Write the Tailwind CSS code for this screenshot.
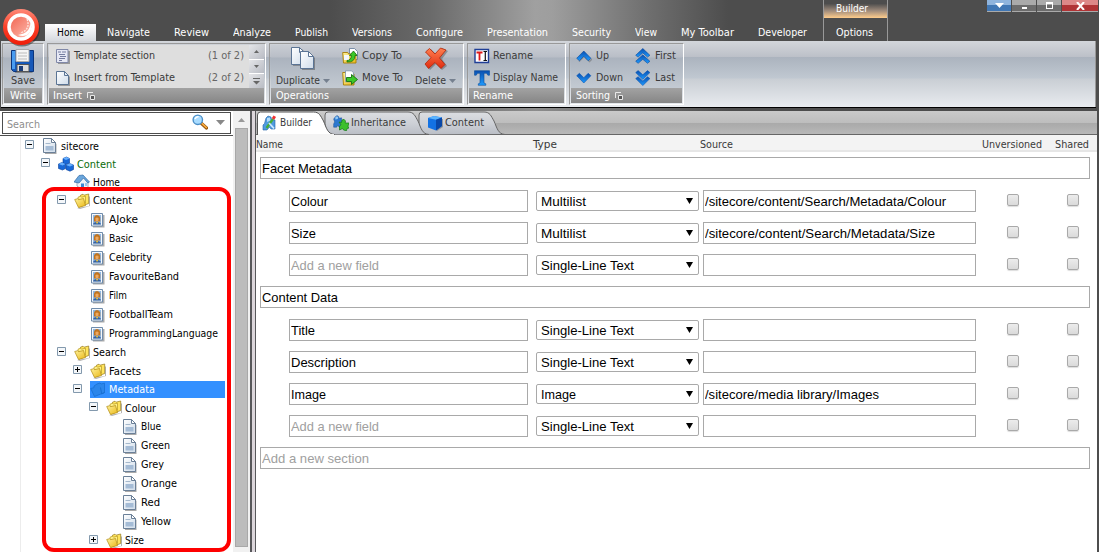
<!DOCTYPE html>
<html lang="en">
<head>
<meta charset="utf-8">
<title>Content Editor</title>
<script src="https://cdn.jsdelivr.net/npm/@tailwindcss/browser@4"></script>
</head>
<body class="relative h-[552px] w-[1099px] overflow-hidden bg-white font-['DejaVu_Sans_Condensed','DejaVu_Sans',sans-serif] text-[11px] leading-[14px] whitespace-nowrap text-[#3a3a3a] [font-stretch:condensed]">

<svg class="absolute h-0 w-0">
  <defs>
    <linearGradient id="gBlue" x1="0" y1="0" x2="0" y2="1"><stop offset="0" stop-color="#0a4fb0"/><stop offset="1" stop-color="#1e9bff"/></linearGradient>
    <linearGradient id="gPage" x1="0" y1="0" x2="1" y2="1"><stop offset="0" stop-color="#fff"/><stop offset="1" stop-color="#cfdcea"/></linearGradient>
    <linearGradient id="gFold" x1="0" y1="0" x2="1" y2="1"><stop offset="0" stop-color="#fff29a"/><stop offset="1" stop-color="#eab818"/></linearGradient>
    <linearGradient id="gRed" x1="0" y1="0" x2="0" y2="1"><stop offset="0" stop-color="#ff8050"/><stop offset="1" stop-color="#e02c10"/></linearGradient>
    <linearGradient id="gTab" x1="0" y1="0" x2="0" y2="1"><stop offset="0" stop-color="#dcdee2"/><stop offset=".5" stop-color="#cdd0d6"/><stop offset="1" stop-color="#b9bdc5"/></linearGradient>
    <linearGradient id="gOrb" x1="0" y1="0" x2="0" y2="1"><stop offset="0" stop-color="#ff8a78"/><stop offset=".5" stop-color="#fa4028"/><stop offset="1" stop-color="#f01c08"/></linearGradient>
    <linearGradient id="gCore" x1="0" y1="0" x2="1" y2="1"><stop offset="0" stop-color="#f0604c"/><stop offset="1" stop-color="#ffc4b8"/></linearGradient>
  </defs>
  <symbol id="doc" viewBox="0 0 16 16"><path d="M3 3h8.500l3 3v10H3z" fill="#555" opacity=".5"/><path d="M1.500.500h8l4 4v10h-12z" fill="url(#gPage)" stroke="#6b8098"/><path d="M9.500.500v4h4z" fill="#fff" stroke="#6b8098"/><path d="M3.500 5.500h5" stroke="#a5b8cc"/><path d="M3.500 8h8v4.500h-8z" fill="#a5bcd6"/></symbol>
  <symbol id="blank" viewBox="0 0 16 16"><path d="M3 3h8l4 4v9H3z" fill="#444" opacity=".45"/><path d="M1.500 1.500h8l4 4v9h-12z" fill="url(#gPage)" stroke="#5b7494"/><path d="M9.500 1.500v4h4z" fill="#e4edf6" stroke="#5b7494"/></symbol>
  <symbol id="tmpl" viewBox="0 0 16 16"><path d="M3 3h12v13H3z" fill="#444" opacity=".45"/><path d="M1.500 1.500h11.500v13H1.500z" fill="#e6e8f4" stroke="#8088a8"/><path d="M3 4h3M7 4h4M4 6.500h6M5 8.500h6M4 10.500h6M4 12.500h3" stroke="#757da0"/></symbol>
  <symbol id="folder" viewBox="0 0 16 16"><path d="M3 15l12-2V3l1 1v9L6 16z" fill="#444" opacity=".4"/><path d="M6.500 2.200l2.500-1 1 1 4.700-1.200v9.500L5 14z" fill="#ffe45c" stroke="#94771a" stroke-width=".7"/><path d="M4 4.200l2.500-1 1 1 4-1v7L5 14z" fill="#fff088" stroke="#b89820" stroke-width=".7"/><path d="M.7 6.500l3-.8 1 1 4.800-1.200 2 7L4.500 14.500z" fill="url(#gFold)" stroke="#b08a10" stroke-width=".7"/></symbol>
  <symbol id="folderSel" viewBox="0 0 16 16"><path d="M7 2l3-1 1 1 3.500-.8v9.300L4.500 14.500 .7 6.500l3.300-.8V4z" fill="#2b86ea" stroke="#1870d2" stroke-width=".8"/><path d="M10.500 5.500l1.200 6.500 3-1.500" stroke="#1870d2" fill="none"/></symbol>
  <symbol id="person" viewBox="0 0 16 16"><path d="M3 3h11.500v12.500H3z" fill="#444" opacity=".45"/><path d="M1.500 1.500h11v12.500h-11z" fill="#f4f8fc" stroke="#6f8cac"/><path d="M3 3h8v9.500H3z" fill="#8fb8e4"/><path d="M4 9.500V5.500Q4.500 3 7 3t3.200 2.500v4z" fill="#c07420"/><path d="M5.500 6q1.500-1 3 0v2.500q-1.500 1.500-3 0z" fill="#eda860"/><path d="M3 12.500q.3-2.500 4-2.500t4 2.500z" fill="#3560a0"/><path d="M6 10h2.200L7 12z" fill="#ffd030"/></symbol>
  <symbol id="cubes" viewBox="0 0 16 16"><g fill="#1768d8" stroke="#0b3f97" stroke-width=".6"><path d="M5 2.500l3.500-1.500 3 1.500v4.500L8 8.500 5 7z"/><path d="M.5 8l3.300-1.500L7.500 8v4.500L4.500 14 .5 12.500z"/><path d="M8 9l3.500-1.500 4 1.500v4.500L12 15.200 8 13.500z"/></g><path d="M5 2.500l3.500-1.500 3 1.500L8 4zM.5 8l3.300-1.500L7.500 8l-3 1.500zM8 9l3.500-1.500 4 1.500L12 10.500z" fill="#67b0ff"/></symbol>
  <symbol id="cube" viewBox="0 0 16 16"><path d="M3 4l13 0v8l-6 4z" fill="#333" opacity=".35"/><path d="M1 3l6-2 8 1.500V11l-6 4.500-8-3z" fill="#1372e4"/><path d="M1 3l6-2 8 1.500-6 2.200z" fill="#5bb4ff"/><path d="M9 4.700l6-2.200V11l-6 4.500z" fill="#0a48a8"/></symbol>
  <symbol id="house" viewBox="0 0 16 16"><path d="M3 7l6-4 5 4v7l-7 1-4-3z" fill="#eef3f9" stroke="#8598ae" stroke-width=".8"/><path d="M0 8L5 1.500 9 1l6.500 7-1.700 1L9.500 4 5 9z" fill="#6aa6dc" stroke="#356da8" stroke-width=".7"/><path d="M7 9.500h3V15H7z" fill="#3d86d0"/><path d="M11 9h2v3h-2z" fill="#9cc7ee"/></symbol>
  <symbol id="glass" viewBox="0 0 16 16"><path d="M9 9l5.500 5" stroke="#9a5a10" stroke-width="3.200" stroke-linecap="round"/><path d="M10 9.500l4.300 4" stroke="#ffb040" stroke-width="1.600" stroke-linecap="round"/><circle cx="5.800" cy="5.800" r="4.700" fill="#a9dcff" stroke="#4b8fc8" stroke-width="1.400"/><path d="M3 5q1-2.700 3.600-2.300" stroke="#fff" stroke-width="1.500" fill="none"/></symbol>
  <symbol id="puzzle" viewBox="0 0 16 16"><path d="M3 2l2-1.300L7 2l.4 2 3.200-.5v4l1.500 2-1.500 1.500V15H7.500L6 12.500 4.500 15H.8v-4L2 8.500.8 5z" fill="#2b78cf" stroke="#1b4f92" stroke-width=".6"/><path d="M3 2.500l2-1 1.400 1.500-.6 2-3 .6z" fill="#92caf8"/></symbol>
  <symbol id="builder" viewBox="0 0 16 16"><path d="M4 3l2-2 3 1 .5 2.500L13 5v9H9l-1.500-2L5 15H1v-5l1.500-1.500z" fill="#4f9be0" stroke="#2461a4" stroke-width=".6"/><path d="M5 3l3-.5.5 3L5 7z" fill="#b4dcfa"/><path d="M4.500 13L11 4" stroke="#46ad38" stroke-width="2.200"/><path d="M11 4l1.800-2.800" stroke="#e33" stroke-width="3"/><path d="M7 8l5 5.500" stroke="#cfe8ff" stroke-width="1.800"/></symbol>
  <symbol id="inherit" viewBox="0 0 16 16"><use href="#puzzle" width="13" height="13"/><path d="M6 7l2.500.500L9 5l2-.7L12.500 6l-.3 2L16 8l-1 3.200 1 1.800-2 .5-.5 2.300-3-.8-1-1.500-3 1.500V11L8 9.800z" fill="#3cc02c" stroke="#167a18" stroke-width=".7"/></symbol>
  <symbol id="copyto" viewBox="0 0 16 16"><path d="M7.500.500h5l3 3v8h-8z" fill="#fff" stroke="#5f7898" stroke-width=".8"/><path d="M.7 4.500h5l1 1.500H14v9H1.500z" fill="url(#gFold)" stroke="#a67e08" stroke-width=".9"/><path d="M2 7h5v5H2z" fill="#f5f8fc"/><path d="M5 12.500q4 0 4.500-5H7.500L11.500 3l3.500 4.500h-2q0 7-8 6.500z" fill="#3cc828" stroke="#147010" stroke-width=".8"/></symbol>
  <symbol id="moveto" viewBox="0 0 16 16"><path d="M.7 2.500h4l1 1.500H12v11H1.500z" fill="url(#gFold)" stroke="#a67e08" stroke-width=".9"/><path d="M3.500.800h6l2 2v9h-8z" fill="#fff" stroke="#7890a8" stroke-width=".8"/><path d="M4.500 7.500h5V4.500l6 5-6 5v-3h-5z" fill="#3cc828" stroke="#147010" stroke-width=".9"/></symbol>
  <symbol id="rename" viewBox="0 0 16 16"><path d="M1 1.500h13.500v13H1z" fill="#fff" stroke="#1f3e96" stroke-width="1.400"/><path d="M2.500 4.500h6M5.500 4.500V12.500" stroke="#e01818" stroke-width="1.800"/><path d="M9.500 3.500h3.500M11.300 3.500v9M9.500 12.500H13" stroke="#111" stroke-width="1.200"/></symbol>
  <symbol id="bigT" viewBox="0 0 16 16"><path d="M.5.700h15v4.500h-1.600L12.500 3.300H10V13l1.800.800v1.500H4.300v-1.500L6 13V3.300H3.500L2.200 5.200H.5z" fill="url(#gBlue)" stroke="#0c4d98" stroke-width=".6"/></symbol>
  <symbol id="up" viewBox="0 0 16 16"><path d="M3 13.500l5-5 5.500 5 2.500-2.500" stroke="#555" opacity=".4" fill="none" stroke-width="1.500"/><path d="M.7 10.300L7.800 3l7.100 7.300-2.700 2.400L7.800 8.300l-4.400 4.400z" fill="url(#gBlue)" stroke="#084a9c" stroke-width=".6"/></symbol>
  <symbol id="down" viewBox="0 0 16 16"><path d="M.7 5.700L7.800 13l7.100-7.300-2.700-2.400L7.800 7.700 3.400 3.300z" fill="url(#gBlue)" stroke="#0a58b4" stroke-width=".6"/></symbol>
  <symbol id="first" viewBox="0 0 16 16"><g fill="url(#gBlue)" stroke="#084a9c" stroke-width=".6"><path d="M.7 7.300L7.800.500l7.100 6.800-2.400 1.800-4.700-4.200-4.700 4.200z"/><path d="M.7 13.300l7.100-6.500 7.100 6.500-2.400 2-4.700-4-4.700 4z"/></g></symbol>
  <symbol id="last" viewBox="0 0 16 16"><g fill="url(#gBlue)" stroke="#0a58b4" stroke-width=".6"><path d="M.7 2.600l7.100 6.800 7.100-6.800L12.500.600 7.800 4.800 3.100.600z"/><path d="M.7 8.600l7.100 6.900 7.100-6.900-2.400-1.900-4.700 4.200L3.100 6.700z"/></g></symbol>
  <symbol id="launch" viewBox="0 0 9 9"><path d="M.5 6V.5H6" fill="none" stroke="#e8e8e8"/><path d="M3.500 3.500h4v4h-4z" fill="#555" stroke="#e8e8e8"/></symbol>
</svg>

<div class="flex h-full flex-col">
  <!-- title bar and ribbon tabs -->
  <header class="flex h-[41px] bg-[linear-gradient(90deg,#4d4d4d_330px,#6a6a6a_430px,#a0a0a0_535px,#9e9e9e_552px,#6e6e6e_650px,#4d4d4d_728px)] text-white">
    <nav class="flex h-full items-end pl-[45px]">
      <div class="flex h-[17px] w-[51px] items-center justify-center bg-[linear-gradient(#fff,#d6d9de)] text-black"><span data-w="27">Home</span></div>
      <div class="flex h-[17px] items-center gap-6 pl-[11px]">
        <span data-w="43">Navigate</span><span data-w="35">Review</span><span data-w="38">Analyze</span><span data-w="33">Publish</span><span data-w="40">Versions</span><span data-w="47">Configure</span><span data-w="61">Presentation</span><span data-w="39">Security</span><span data-w="22">View</span><span data-w="53">My Toolbar</span><span data-w="49">Developer</span>
      </div>
    </nav>
    <div class="ml-4 flex w-[65px] flex-col justify-between border-x border-[#999]">
      <div class="flex h-[18px] items-center bg-[linear-gradient(#4d4d4d_20%,#a08c7c_60%,#ffcd8c)] pl-3"><span data-w="32">Builder</span></div>
      <div class="flex h-[17px] items-center pl-3"><span data-w="37">Options</span></div>
    </div>
    <div class="ml-auto flex h-3 gap-px pr-px">
      <div class="flex w-6 items-center justify-center border-b border-[#aaa] bg-[linear-gradient(#8fb4dd_45%,#4177b4_45%)]"><svg class="h-[5px] w-[9px]" viewBox="0 0 9 5"><path d="M0 0h9L4.500 5z" fill="#fff"/></svg></div>
      <div class="flex w-6 items-end justify-center border-b border-[#aaa] bg-[linear-gradient(#aaa_45%,#6c6c6c_45%)] pb-[2px]"><i class="h-[2px] w-[5px] bg-white"></i></div>
      <div class="flex w-6 items-center justify-center border-b border-[#aaa] bg-[linear-gradient(#aaa_45%,#6c6c6c_45%)]"><i class="h-[7px] w-[7px] border border-t-2 border-white"></i></div>
      <div class="flex w-9 items-center justify-center border-b border-[#aaa] bg-[linear-gradient(#d88_45%,#b03436_45%)]"><svg class="h-2 w-[9px]" viewBox="0 0 9 8"><path d="M1 0l7 8M8 0L1 8" stroke="#fff" stroke-width="2"/></svg></div>
    </div>
  </header>

  <!-- ribbon -->
  <section class="flex h-[70px] flex-col bg-[linear-gradient(90deg,#4d4d4d_330px,#8c8c8c_535px,#4d4d4d_728px)] pr-[13px] pl-px">
    <div class="mr-[-10px] flex h-[66px] gap-[3px] border-r border-[#999] bg-[linear-gradient(#d3d6db,#bcc0c8_16px,#abb3be_16px,#c0c8d1_37px,#c9ced4_38px,#e8ebef_66px)] pt-[2px] pl-[1px]">
      <div class="flex h-[62px] w-[42px] flex-col border border-[#999] border-r-white border-b-white p-px">
        <div class="flex flex-1 flex-col items-center justify-between bg-[linear-gradient(#c9cdd4,#b9bec7_12px,#abb3be_13px,#c3cad2)] pt-1">
          <svg class="h-6 w-6" viewBox="0 0 24 24"><path d="M3 3h20v19l-2 2H4z" fill="#333" opacity=".4"/><path d="M.5 1.500h22v21h-20l-2-2z" fill="#1658b8" stroke="#0b357c"/><path d="M1 2h3v18H1z" fill="#4a9cf0"/><path d="M5 .5h13v12H5z" fill="#f5f5f5" stroke="#aaa"/><path d="M7 4h9M7 7h9M7 10h9" stroke="#bbb"/><path d="M6 15.500h12v7H6z" fill="#ddd" stroke="#555"/><path d="M8 17h4v5H8z" fill="#1c3d78"/></svg>
          <span data-w="24">Save</span>
        </div>
        <div class="flex h-[15px] items-center justify-center bg-[linear-gradient(#a2a2a2,#868686)] pt-px text-white"><span data-w="26">Write</span></div>
      </div>
      <div class="flex h-[62px] w-[219px] flex-col border border-[#999] border-r-white border-b-white p-px">
        <div class="flex flex-1 bg-[#dedede]">
          <div class="flex flex-1 flex-col justify-between pt-[3px] pr-[5px] pb-[2px] pl-[6px]">
            <div class="flex items-center"><svg class="mr-[3px] h-4 w-4"><use href="#tmpl"/></svg><span data-w="81">Template section</span><span class="ml-auto text-[#666]" data-w="36">(1 of 2)</span></div>
            <div class="flex items-center"><svg class="mr-[3px] h-4 w-4"><use href="#blank"/></svg><span data-w="101">Insert from Template</span><span class="ml-auto text-[#666]" data-w="36">(2 of 2)</span></div>
          </div>
          <div class="flex w-[15px] flex-col gap-px bg-white">
            <div class="flex flex-1 items-center justify-center bg-[linear-gradient(135deg,#e4e5e8,#b9bcc4)]"><svg class="h-[3px] w-[5px]" viewBox="0 0 5 3"><path d="M0 3h5L2.500 0z" fill="#666"/></svg></div>
            <div class="flex flex-1 items-center justify-center bg-[linear-gradient(135deg,#e4e5e8,#b9bcc4)]"><svg class="h-[3px] w-[5px]" viewBox="0 0 5 3"><path d="M0 0h5L2.500 3z" fill="#666"/></svg></div>
            <div class="flex flex-1 items-center justify-center bg-[linear-gradient(135deg,#e4e5e8,#b9bcc4)]"><svg class="h-[7px] w-[7px]" viewBox="0 0 7 7"><path d="M0 .5h7" stroke="#666"/><path d="M0 3h7L3.500 6.500z" fill="#666"/></svg></div>
          </div>
        </div>
        <div class="flex h-[15px] items-center gap-[5px] bg-[linear-gradient(#a2a2a2,#868686)] pt-px pl-1 text-white"><span data-w="29">Insert</span><svg class="h-[9px] w-[9px]"><use href="#launch"/></svg></div>
      </div>
      <div class="flex h-[62px] w-[195px] flex-col border border-[#999] border-r-white border-b-white p-px">
        <div class="flex flex-1 bg-[linear-gradient(#c9cdd4,#b9bec7_12px,#abb3be_13px,#c3cad2)] pl-[5px]">
          <div class="flex w-[66px] flex-col justify-between pt-[2px]">
            <svg class="ml-[15px] h-[23px] w-6" viewBox="0 0 24 23"><path d="M2 2h9l4 4v13H2z" fill="#333" opacity=".35"/><path d="M.5.500h8l5 5v12H.500z" fill="url(#gPage)" stroke="#5b7494"/><path d="M8.500.500v5h5z" fill="#fff" stroke="#5b7494"/><path d="M11 7h9l4 4v12H11z" fill="#333" opacity=".4"/><path d="M9.500 4.500h8l5 5v12h-13z" fill="url(#gPage)" stroke="#5b7494"/><path d="M17.500 4.500v5h5z" fill="#fff" stroke="#5b7494"/></svg>
            <div class="flex items-center gap-[3px]"><span data-w="44">Duplicate</span><svg class="h-1 w-[7px]" viewBox="0 0 7 4"><path d="M0 0h7L3.500 4z" fill="#75808f"/></svg></div>
          </div>
          <div class="flex w-[73px] flex-col justify-between pt-[3px] pb-[2px]">
            <div class="flex items-center gap-1"><svg class="h-4 w-4"><use href="#copyto"/></svg><span data-w="40">Copy To</span></div>
            <div class="flex items-center gap-1"><svg class="h-4 w-4"><use href="#moveto"/></svg><span data-w="41">Move To</span></div>
          </div>
          <div class="flex flex-col justify-between pt-[2px]">
            <svg class="ml-[9px] h-[23px] w-6" viewBox="0 0 24 23"><path d="M3 6l4-4 6 6 5-7 6 3-6 8 5 7-5 4-6-6-6 6-4-5 6-7z" fill="#333" opacity=".35"/><path d="M1.500 5l4-3.500L11 7l5.500-6L22 3l-6.500 8L21 17.500 17 21.500 11 15.500 4.500 21.500 1 17l6-6.300z" fill="url(#gRed)" stroke="#b32408" stroke-width=".8"/></svg>
            <div class="flex items-center gap-[3px]"><span data-w="31">Delete</span><svg class="h-1 w-[7px]" viewBox="0 0 7 4"><path d="M0 0h7L3.500 4z" fill="#75808f"/></svg></div>
          </div>
        </div>
        <div class="flex h-[15px] items-center bg-[linear-gradient(#a2a2a2,#868686)] pt-px pl-[5px] text-white"><span data-w="53">Operations</span></div>
      </div>
      <div class="flex h-[62px] w-[99px] flex-col border border-[#999] border-r-white border-b-white p-px">
        <div class="flex flex-1 flex-col justify-between bg-[linear-gradient(#c9cdd4,#b9bec7_12px,#abb3be_13px,#c3cad2)] pt-[3px] pb-[2px] pl-[5px]">
          <div class="flex items-center gap-[3px]"><svg class="h-4 w-4"><use href="#rename"/></svg><span data-w="40">Rename</span></div>
          <div class="flex items-center gap-[3px]"><svg class="h-4 w-4"><use href="#bigT"/></svg><span data-w="65">Display Name</span></div>
        </div>
        <div class="flex h-[15px] items-center bg-[linear-gradient(#a2a2a2,#868686)] pt-px pl-1 text-white"><span data-w="40">Rename</span></div>
      </div>
      <div class="flex h-[62px] w-[115px] flex-col border border-[#999] border-r-white border-b-white p-px">
        <div class="flex flex-1 bg-[linear-gradient(#c9cdd4,#b9bec7_12px,#abb3be_13px,#c3cad2)] pl-[5px]">
          <div class="flex w-[59px] flex-col justify-between pt-[3px] pb-[2px]">
            <div class="flex items-center gap-1"><svg class="h-4 w-4"><use href="#up"/></svg><span data-w="13">Up</span></div>
            <div class="flex items-center gap-1"><svg class="h-4 w-4"><use href="#down"/></svg><span data-w="27">Down</span></div>
          </div>
          <div class="flex flex-col justify-between pt-[3px] pb-[2px]">
            <div class="flex items-center gap-1"><svg class="h-4 w-4"><use href="#first"/></svg><span data-w="21">First</span></div>
            <div class="flex items-center gap-1"><svg class="h-4 w-4"><use href="#last"/></svg><span data-w="20">Last</span></div>
          </div>
        </div>
        <div class="flex h-[15px] items-center gap-[5px] bg-[linear-gradient(#a2a2a2,#868686)] pt-px pl-[5px] text-white"><span data-w="34">Sorting</span><svg class="h-[9px] w-[9px]"><use href="#launch"/></svg></div>
      </div>
    </div>
    <div class="mr-[-10px] h-px bg-black"></div>
  </section>

  <div class="flex min-h-0 flex-1">
    <!-- content tree -->
    <aside class="flex w-[233px] flex-col">
      <div class="h-[25px] border-b border-[#4d4d4d] pt-px pl-[2px]">
        <div class="flex h-[22px] w-[229px] items-center border border-[#4d4d4d] pr-[5px] pl-1 text-[#8e8e8e]">
          <span class="pt-[3px]" data-w="33">Search</span>
          <svg class="mr-[8px] mb-[2px] ml-auto h-4 w-4"><use href="#glass"/></svg>
          <svg class="mb-px h-[5px] w-[9px]" viewBox="0 0 9 5"><path d="M0 0h9L4.500 5z" fill="#888"/></svg>
        </div>
      </div>
      <div id="tree" class="ml-5 flex-1 border-l border-[#ececec] pt-px text-black"></div>
    </aside>
    <div class="flex w-[17px] flex-col items-center bg-[#f1f1f1]">
      <svg class="mt-[7px] mb-[6px] h-1 w-[7px]" viewBox="0 0 7 4"><path d="M0 4h7L3.500 0z" fill="#999"/></svg>
      <div class="h-[419px] w-[13px] border border-[#a8a8a8] bg-[#bcbcbc]"></div>
    </div>
    <div class="w-[6px] border-r border-l-2 border-[#57575a] bg-[#dcd6db]"></div>

    <!-- template builder -->
    <main class="flex flex-1 flex-col border-r-2 border-[#4d4d4d]">
      <div class="relative flex h-6 border-b border-[#666] bg-[linear-gradient(#cacaca,#bdbdbd_12px,#a9a9a9_12px,#b8b8b8)]">
        <svg class="absolute top-0 left-0 h-6 w-[252px]" viewBox="0 0 252 24">
          <path d="M163 24V4q0-3 3-3h62c6 0 7 4 10 9 3 7 4 13 11 13.500z" fill="url(#gTab)" stroke="#666"/>
          <path d="M69 24V4q0-3 3-3h80c6 0 7 4 10 9 3 7 4 13 11 13.500z" fill="url(#gTab)" stroke="#666"/>
          <path d="M1.500 24V4q0-3 3-3h53c6 0 7 4 10 9 3 7 4 13 11 13.500V24z" fill="#fff" stroke="#555"/>
          <path d="M2 23.500h76" stroke="#f3f3f3"/>
        </svg>
        <div class="relative flex w-[70px] items-center gap-[2px] pl-[6px]"><svg class="h-4 w-4"><use href="#builder"/></svg><span data-w="32">Builder</span></div>
        <div class="relative flex w-[94px] items-center gap-[2px] pl-[7px]"><svg class="h-4 w-4"><use href="#inherit"/></svg><span data-w="55">Inheritance</span></div>
        <div class="relative flex items-center gap-[2px] pl-[7px]"><svg class="h-4 w-4"><use href="#cube"/></svg><span data-w="39">Content</span></div>
      </div>
      <div class="flex h-[17px] items-center border-b-2 border-[#e6e6e6] bg-[#f3f3f3] pt-[4px]">
        <span class="w-[277px]"><span data-w="27">Name</span></span><span class="w-[167px]"><span data-w="24">Type</span></span><span class="w-[282px]"><span data-w="33">Source</span></span><span class="w-[73px]"><span data-w="60">Unversioned</span></span><span data-w="34">Shared</span>
      </div>
      <div id="fields" class="flex flex-col pt-[5px] pl-1 font-['Liberation_Sans',sans-serif] text-[13.33px] text-black"></div>
    </main>
  </div>
</div>

<!-- highlight frame and Sitecore button -->
<div class="absolute top-[187px] left-[42px] h-[365px] w-[189px] rounded-[12px] border-4 border-[#fe0000]"></div>
<svg class="absolute top-[8px] left-[2px] h-[39px] w-[39px]" viewBox="0 0 39 39"><circle cx="20" cy="20.500" r="18" fill="#222" opacity=".5"/><circle cx="19" cy="19" r="18" fill="url(#gOrb)"/><circle cx="19" cy="19" r="12" fill="url(#gCore)" stroke="#fff" stroke-width="3.500"/><path d="M28 14Q29 25 16 27q9 3 12.500-4 1.500-4-.5-9z" fill="#fff"/><path d="M25 11Q29 22 18 25" fill="none" stroke="#ffe8e2" stroke-width="1.200" stroke-dasharray="2 1"/></svg>

<script>
// [label, level, icon, expander, row height, label width]
const nodes = [
  ['sitecore', 0, 'doc', '-', 18, 38], ['Content', 1, 'cubes', '-', 18, 39], ['Home', 2, 'house', '', 18, 27],
  ['Content', 2, 'folder', '-', 19, 39], ['AJoke', 3, 'person', '', 19, 29], ['Basic', 3, 'person', '', 19, 24],
  ['Celebrity', 3, 'person', '', 19, 43], ['FavouriteBand', 3, 'person', '', 19, 70], ['Film', 3, 'person', '', 19, 18],
  ['FootballTeam', 3, 'person', '', 19, 64], ['ProgrammingLanguage', 3, 'person', '', 19, 109], ['Search', 2, 'folder', '-', 19, 33],
  ['Facets', 3, 'folder', '+', 18, 32], ['Metadata', 3, 'folderSel', '-', 19, 46], ['Colour', 4, 'folder', '-', 18, 31],
  ['Blue', 5, 'doc', '', 19, 20], ['Green', 5, 'doc', '', 19, 29], ['Grey', 5, 'doc', '', 19, 23], ['Orange', 5, 'doc', '', 19, 36],
  ['Red', 5, 'doc', '', 19, 19], ['Yellow', 5, 'doc', '', 19, 30], ['Size', 4, 'folder', '+', 19, 19]
];
document.getElementById('tree').innerHTML = nodes.map(([label, level, icon, exp, h, w], i) => {
  const box = exp
    ? `<svg class="mb-[3px] h-[9px] w-[9px]" viewBox="0 0 9 9"><path d="M.5.5h8v8h-8z" fill="#f4f7fa" stroke="#8399ad"/><path d="M2 4.500h5${exp === '+' ? 'M4.500 2v5' : ''}" stroke="#000"/></svg>`
    : '<i class="w-[9px]"></i>';
  const tone = icon === 'folderSel' ? 'flex h-[17px] w-[135px] items-center gap-[3px] bg-[#3390ff] text-white'
    : i === 1 ? 'flex items-center gap-[3px] text-[#0a6b0a]' : 'flex items-center gap-[3px]';
  return `<div class="flex items-center gap-2" style="height:${h}px;padding-left:${level * 16 + 4}px">${box}<div class="${tone}"><svg class="h-4 w-4"><use href="#${icon}"/></svg><span class="pt-px" data-w="${w}">${label}</span></div></div>`;
}).join('');

// [section, width, [[name, width, type, width, source, width]]]
const sections = [
  ['Facet Metadata', 90, [['Colour', 37, 'Multilist', 45, '/sitecore/content/Search/Metadata/Colour', 241], ['Size', 25, 'Multilist', 45, '/sitecore/content/Search/Metadata/Size', 230], ['', 0, 'Single-Line Text', 93, '', 0]]],
  ['Content Data', 76, [['Title', 24, 'Single-Line Text', 93, '', 0], ['Description', 65, 'Single-Line Text', 93, '', 0], ['Image', 35, 'Image', 35, '/sitecore/media library/Images', 174], ['', 0, 'Single-Line Text', 93, '', 0]]],
  ['', 0, []]
];
const check = '<i class="h-3 w-3 rounded-[2px] border border-[#a9a9a9] bg-[linear-gradient(#ececec,#dadada)] shadow-[0_1px_1px_#ddd]"></i>';
document.getElementById('fields').innerHTML = sections.map(([name, w, rows]) => `
  <section class="mb-[10px] flex flex-col gap-[10px]">
    <div class="mb-px flex h-[22px] w-[830px] items-center border border-[#a9a9a9] pt-px pl-[1px]">${name ? `<span data-w="${w}">${name}</span>` : '<span class="text-[#a0a0a0]" data-w="107">Add a new section</span>'}</div>
    ${rows.map(([n, nw, t, tw, s, sw]) => `
    <div class="flex h-[22px] items-center pl-[29px]">
      <div class="flex h-[22px] w-[239px] items-center border border-[#a9a9a9] pt-px pl-[1px]">${n ? `<span data-w="${nw}">${n}</span>` : '<span class="text-[#a0a0a0]" data-w="88">Add a new field</span>'}</div>
      <div class="ml-2 flex h-5 w-[163px] items-center justify-between rounded-[2px] border border-[#a9a9a9] pt-px pr-[5px] pl-1"><span data-w="${tw}">${t}</span><svg class="mb-[2px] h-[6px] w-[7px]" viewBox="0 0 7 6"><path d="M0 0h7L3.500 6z" fill="#000"/></svg></div>
      <div class="ml-1 flex h-[22px] w-[273px] items-center border border-[#a9a9a9] pt-px pl-[1px]">${s ? `<span data-w="${sw}">${s}</span>` : ''}</div>
      <div class="flex gap-12 pb-[2px] pl-[31px]">${check}${check}</div>
    </div>`).join('')}
  </section>`).join('');

function fit() {
  document.querySelectorAll('[data-w]').forEach(el => {
    const range = document.createRange();
    range.selectNodeContents(el);
    const natural = range.getBoundingClientRect().width;
    el.style.cssText = `display:block;width:${el.dataset.w}px;transform-origin:0 50%;transform:scaleX(${el.dataset.w / natural})`;
  });
}
window.addEventListener('load', fit);
</script>
</body>
</html>
